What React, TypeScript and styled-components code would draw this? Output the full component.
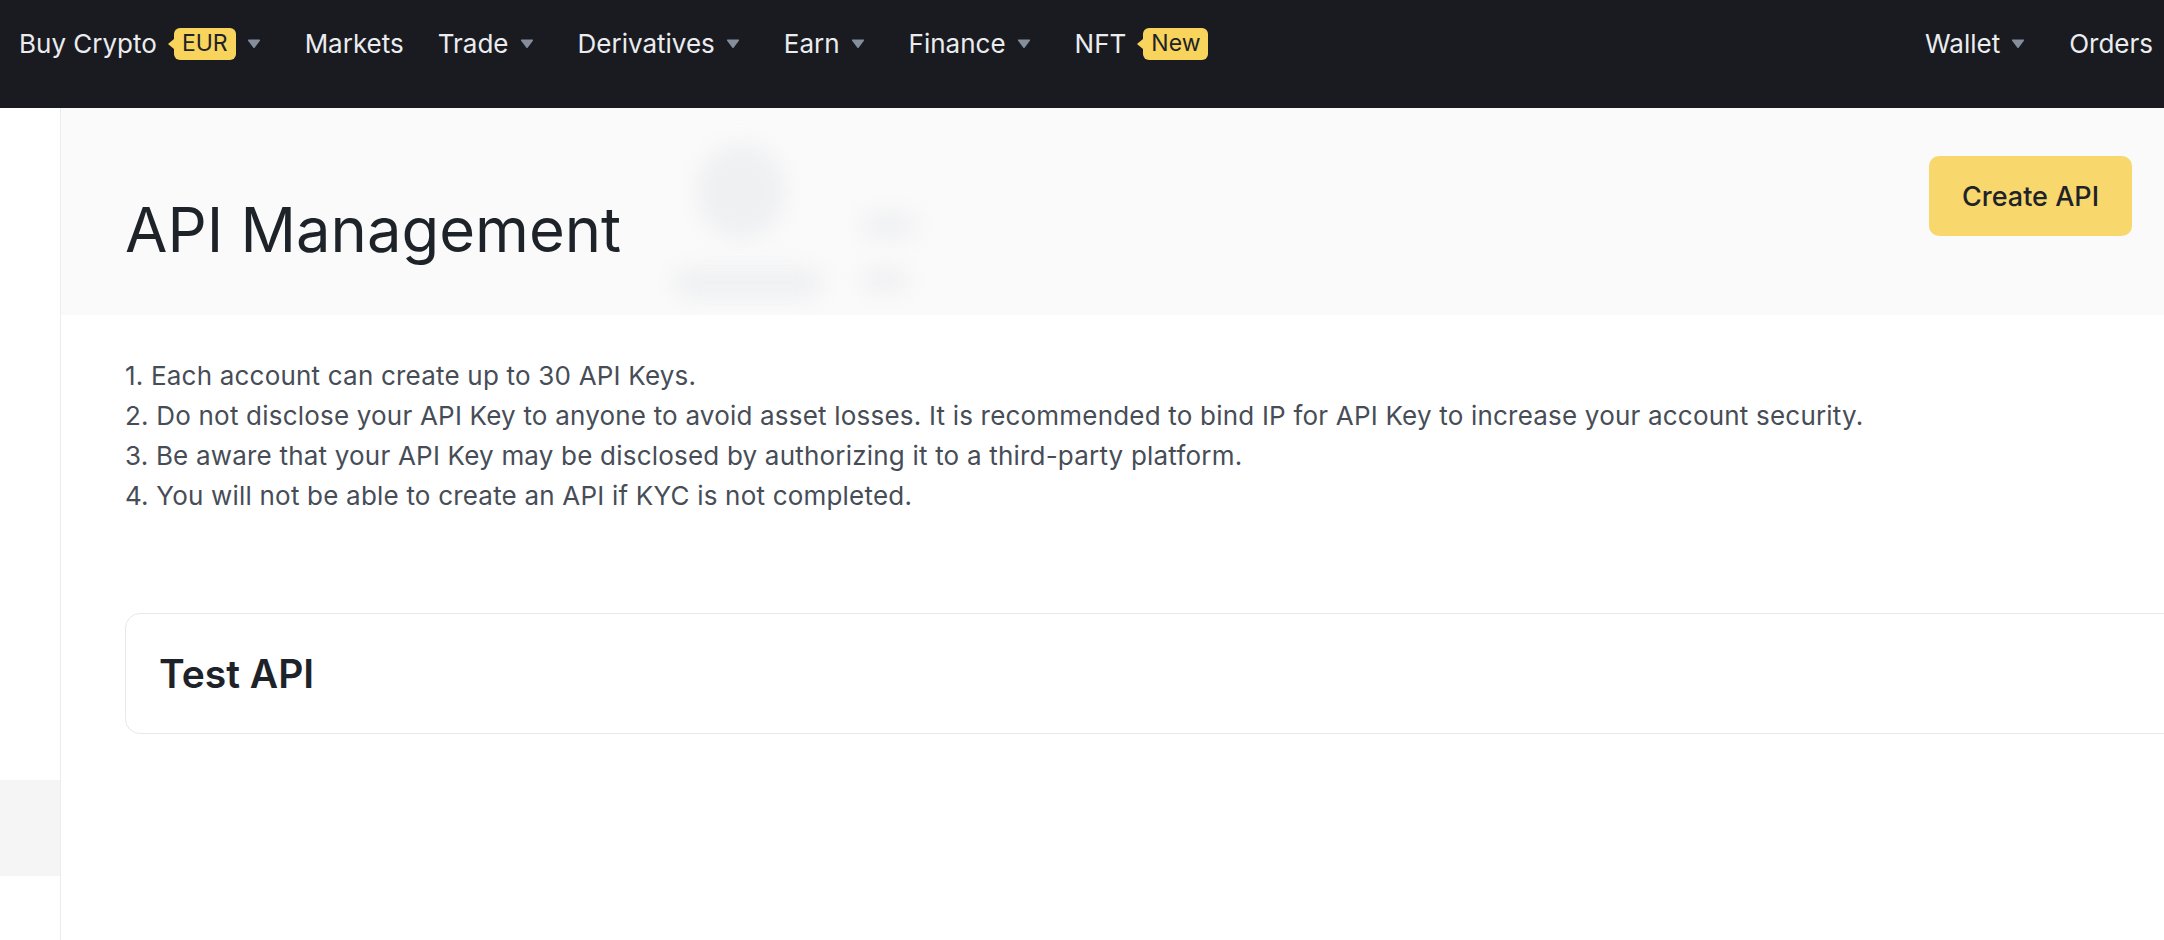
import React from "react";
import styled, { createGlobalStyle } from "styled-components";

const GlobalStyle = createGlobalStyle`
  html, body {
    margin: 0;
    padding: 0;
    overflow: hidden;
    background: #ffffff;
    font-family: Inter, "Noto Sans", "Liberation Sans", sans-serif;
  }
  #root { min-height: 100vh; }
  * { box-sizing: border-box; }
`;

const Page = styled.div`
  display: flex;
  flex-direction: column;
  min-height: 100vh;
  width: 100%;
  overflow: hidden;
`;

const TopNav = styled.header`
  height: 108px;
  flex: none;
  background: #1a1b20;
  padding: 0 11px 20px 19px;
`;

const NavRow = styled.nav`
  height: 88px;
  display: flex;
  align-items: center;
  justify-content: space-between;
`;

const NavGroup = styled.div`
  display: flex;
  align-items: center;
  gap: 34px;
`;

const NavItem = styled.div<{ $caret?: boolean }>`
  display: flex;
  align-items: center;
  gap: 11px;
  margin-right: ${(p) => (p.$caret ? "10px" : "0")};
  color: #eaecef;
  font-size: 26px;
  line-height: 1.21;
  font-weight: 400;
  white-space: nowrap;
`;

const Badge = styled.span`
  position: relative;
  margin-left: 6px;
  height: 32px;
  padding: 0 8px;
  display: inline-flex;
  align-items: center;
  background: #f8d45c;
  color: #1e2329;
  font-size: 23px;
  border-radius: 6px;
  &::before {
    content: "";
    position: absolute;
    left: -6px;
    top: 50%;
    transform: translateY(-50%);
    border-top: 5px solid transparent;
    border-bottom: 5px solid transparent;
    border-right: 6px solid #f8d45c;
  }
`;

const Caret = () => (
  <svg width="14" height="10" viewBox="0 0 14 10" aria-hidden="true">
    <path
      d="M1.6 0.6 H12.4 Q13.6 0.6 12.9 1.7 L7.8 8.6 Q7 9.6 6.2 8.6 L1.1 1.7 Q0.4 0.6 1.6 0.6 Z"
      fill="#848e9c"
    />
  </svg>
);

const Body = styled.div`
  flex: 1;
  display: flex;
`;

const Sidebar = styled.aside`
  width: 61px;
  flex: none;
  border-right: 1px solid #eaecef;
  display: flex;
  flex-direction: column;
`;

const SideActive = styled.div`
  margin-top: 672px;
  height: 96px;
  background: #f5f5f5;
`;

const Main = styled.main`
  flex: 1;
  min-width: 0;
  display: flex;
  flex-direction: column;
`;

const Header = styled.section`
  position: relative;
  height: 207px;
  background: #fafafa;
  display: flex;
  justify-content: space-between;
  align-items: flex-start;
  padding: 48px 32px 0 64px;
  overflow: hidden;
`;

const Blur = styled.div<{ $round?: boolean }>`
  position: absolute;
  background: #ebecef;
  filter: blur(11px);
  border-radius: ${(p) => (p.$round ? "50%" : "14px")};
  opacity: 0.7;
`;

const Title = styled.h1`
  position: relative;
  margin: 36px 0 0;
  font-size: 61.5px;
  line-height: 76px;
  font-weight: 400;
  color: #1e2329;
`;

const PrimaryButton = styled.button`
  position: relative;
  width: 203px;
  height: 80px;
  border: none;
  border-radius: 10px;
  background: #f8d76c;
  color: #1e2329;
  font-family: inherit;
  font-size: 27px;
  font-weight: 500;
  cursor: pointer;
`;

const Content = styled.section`
  padding: 41px 0 0 64px;
  margin-right: -60px;
`;

const Notes = styled.ol`
  list-style: none;
  margin: 0;
  padding: 0;
  color: #474d57;
  font-size: 26px;
  letter-spacing: 0.2px;
  line-height: 40px;
`;

const Card = styled.div`
  margin-top: 97px;
  border: 1px solid #e6e8ea;
  border-radius: 15px;
  padding: 36px 33px;
`;

const CardTitle = styled.h2`
  margin: 0;
  font-size: 39px;
  line-height: 47px;
  font-weight: 600;
  color: #1e2329;
`;

const leftNav = [
  { label: "Buy Crypto", badge: "EUR", caret: true },
  { label: "Markets" },
  { label: "Trade", caret: true },
  { label: "Derivatives", caret: true },
  { label: "Earn", caret: true },
  { label: "Finance", caret: true },
  { label: "NFT", badge: "New" },
];

const notes = [
  "1. Each account can create up to 30 API Keys.",
  "2. Do not disclose your API Key to anyone to avoid asset losses. It is recommended to bind IP for API Key to increase your account security.",
  "3. Be aware that your API Key may be disclosed by authorizing it to a third-party platform.",
  "4. You will not be able to create an API if KYC is not completed.",
];

export default function App() {
  return (
    <>
      <GlobalStyle />
      <Page>
        <TopNav>
          <NavRow>
            <NavGroup>
              {leftNav.map((n) => (
                <NavItem key={n.label} $caret={n.caret}>
                  <span>{n.label}</span>
                  {n.badge && <Badge>{n.badge}</Badge>}
                  {n.caret && <Caret />}
                </NavItem>
              ))}
            </NavGroup>
            <NavGroup>
              <NavItem $caret>
                <span>Wallet</span>
                <Caret />
              </NavItem>
              <NavItem>
                <span>Orders</span>
              </NavItem>
            </NavGroup>
          </NavRow>
        </TopNav>
        <Body>
          <Sidebar>
            <SideActive />
          </Sidebar>
          <Main>
            <Header>
              <Blur $round style={{ left: 635, top: 36, width: 90, height: 95 }} />
              <Blur style={{ left: 800, top: 104, width: 56, height: 26 }} />
              <Blur style={{ left: 612, top: 160, width: 150, height: 30 }} />
              <Blur style={{ left: 800, top: 160, width: 48, height: 24 }} />
              <Title>API Management</Title>
              <PrimaryButton>Create API</PrimaryButton>
            </Header>
            <Content>
              <Notes>
                {notes.map((t) => (
                  <li key={t}>{t}</li>
                ))}
              </Notes>
              <Card>
                <CardTitle>Test API</CardTitle>
              </Card>
            </Content>
          </Main>
        </Body>
      </Page>
    </>
  );
}
